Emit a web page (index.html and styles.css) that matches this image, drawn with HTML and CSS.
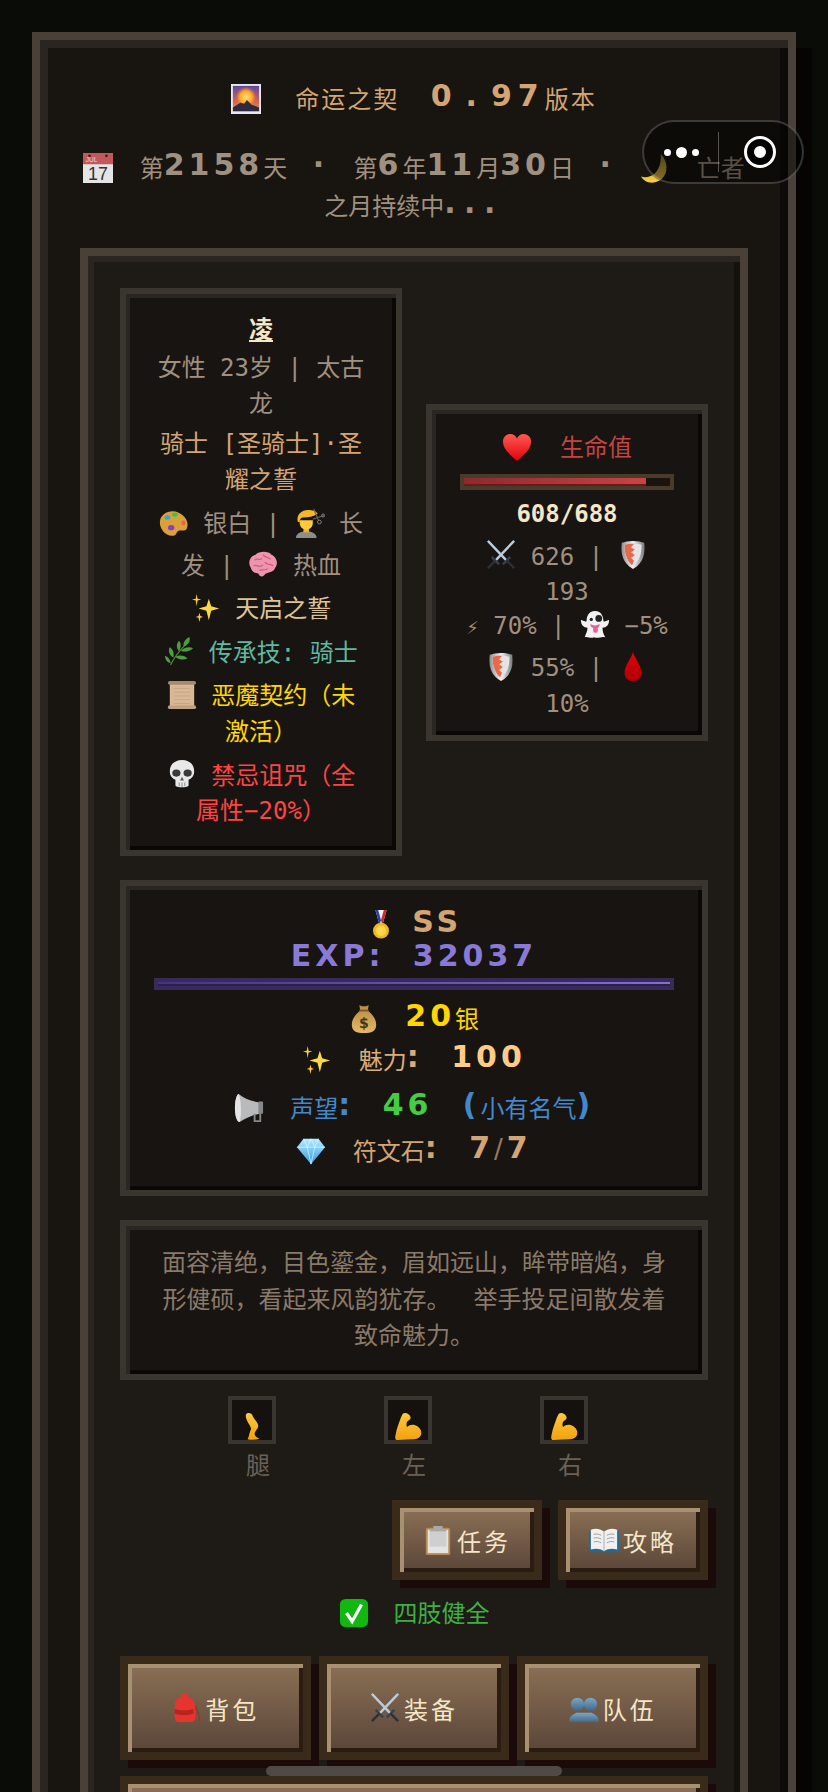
FILE: index.html
```html
<!DOCTYPE html>
<html>
<head>
    <title>命运之契</title>
    <link rel="stylesheet" href="styles.css">
</head>
<body>
    <svg class="sprite" xmlns="http://www.w3.org/2000/svg">
        <defs>
            <linearGradient id="g-sky" x1="0" y1="0" x2="0" y2="1"><stop offset="0" stop-color="#5b4a9e"/><stop offset=".55" stop-color="#c9605a"/><stop offset="1" stop-color="#f0913a"/></linearGradient>
            <radialGradient id="g-sun"><stop offset="0" stop-color="#ffe27a"/><stop offset=".6" stop-color="#ffa726"/><stop offset="1" stop-color="#ff7a2a" stop-opacity="0"/></radialGradient>
            <linearGradient id="g-moon" x1="0" y1="0" x2="0" y2="1"><stop offset="0" stop-color="#8f7a3c"/><stop offset="1" stop-color="#ffd23c"/></linearGradient>
            <linearGradient id="g-skin" x1="0" y1="0" x2="0" y2="1"><stop offset="0" stop-color="#ffc83d"/><stop offset="1" stop-color="#f2a20f"/></linearGradient>
            <linearGradient id="g-steel" x1="0" y1="0" x2="1" y2="0"><stop offset="0" stop-color="#8d8f92"/><stop offset=".5" stop-color="#f2f2f2"/><stop offset="1" stop-color="#77797c"/></linearGradient>
            <linearGradient id="g-heart" x1="0" y1="0" x2="0" y2="1"><stop offset="0" stop-color="#ff5a50"/><stop offset="1" stop-color="#e0000c"/></linearGradient>
            <linearGradient id="g-drop" x1="0" y1="0" x2="0" y2="1"><stop offset="0" stop-color="#e8000a"/><stop offset="1" stop-color="#a80006"/></linearGradient>
            <linearGradient id="g-gem" x1="0" y1="0" x2="0" y2="1"><stop offset="0" stop-color="#b5ecff"/><stop offset="1" stop-color="#2f9be8"/></linearGradient>
            <linearGradient id="g-bust" x1="0" y1="0" x2="0" y2="1"><stop offset="0" stop-color="#7fa6c4"/><stop offset="1" stop-color="#3f6a8c"/></linearGradient>
            <linearGradient id="g-bag" x1="0" y1="0" x2="0" y2="1"><stop offset="0" stop-color="#b88a42"/><stop offset="1" stop-color="#e2b866"/></linearGradient>
        </defs>
        <symbol id="i-sunrise" viewBox="0 0 32 32"><rect width="32" height="32" fill="#e6e8f2"/><rect x="2" y="2" width="28" height="27" fill="url(#g-sky)"/><circle cx="16" cy="14" r="11" fill="url(#g-sun)"/><path d="M2 29V25L10 20 14 21 17 17 22 22 30 25V29Z" fill="#2f2a40"/></symbol>
        <symbol id="i-moon" viewBox="0 0 32 32"><path d="M22 1C31 9 31 27 17 31 10 33 4 30 1 25 12 29 24 19 22 1Z" fill="url(#g-moon)"/></symbol>
        <symbol id="i-palette" viewBox="0 0 32 32"><path d="M1 14C2 6 12 1 21 5 28 8 32 15 30 21 29 25 24 24 22 24 19 24 19 28 17 29 9 32 0 23 1 14Z" fill="#d9a03c"/><ellipse cx="9" cy="10" rx="3" ry="2.4" fill="#2aa8e0"/><ellipse cx="17" cy="7" rx="3" ry="2.2" fill="#3cc43c"/><ellipse cx="26" cy="16" rx="2.2" ry="2.6" fill="#f0604a"/><ellipse cx="13" cy="21" rx="3.4" ry="2.8" fill="#8a3cc8"/></symbol>
        <symbol id="i-haircut" viewBox="0 0 32 32"><path d="M1 32C1 27 6 25 12 25S23 27 23 32Z" fill="#8d8d8d"/><rect x="9" y="20" width="6" height="6" fill="#f0b028"/><path d="M5 13H19V16C19 20 16 23 12 23S5 20 5 16Z" fill="#ffc83d"/><path d="M3 15C1 7 7 2 14 2 18 2 23 3 24 6 20 9 14 10 9 10 6 10 5 12 5 15Z" fill="#f4b62a"/><path d="M20 1 25 13M31 8 19 12" stroke="#666" stroke-width="1.2" fill="none"/><circle cx="26" cy="15" r="2" fill="none" stroke="#888"/><circle cx="30" cy="8" r="1.6" fill="none" stroke="#888"/></symbol>
        <symbol id="i-brain" viewBox="0 0 32 32"><path d="M3 20C-1 14 3 7 8 6 12 2 22 2 25 6 30 8 33 15 29 20 27 26 21 24 18 27 16 31 12 29 11 26 7 26 4 24 3 20Z" fill="#ee94ae"/><path d="M7 12C10 9 12 13 15 10M16 6C18 10 22 8 24 11M6 18C10 16 12 21 16 17M18 14C20 18 24 15 27 18M12 23C15 21 18 24 21 21" stroke="#c8607e" stroke-width="1.3" fill="none"/></symbol>
        <symbol id="i-sparkles" viewBox="0 0 32 32"><path d="M19 6 21.5 14 30 16.500 21.500 19 19 29 16.500 19 8 16.500 16.500 14Z" fill="#ffd84a"/><path d="M6 1 7 6 11 7 7 8 6 14 5 8 1 7 5 6Z" fill="#ffca3a"/><path d="M9 21 10 24.500 13 25.500 10 26.500 9 31 8 26.500 5 25.500 8 24.500Z" fill="#ffca3a"/></symbol>
        <symbol id="i-herb" viewBox="0 0 32 32"><path d="M7 31C10 24 16 16 26 6" stroke="#5a8a3c" stroke-width="1.2" fill="none"/><path d="M27 1C29 6 25 10 21 11 20 7 23 3 27 1ZM16 5C19 8 18 13 16 16 13 13 13 8 16 5ZM31 13C27 17 22 17 18 16 21 12 27 11 31 13ZM6 12C10 14 11 19 10 23 6 21 4 16 6 12ZM25 24C21 26 15 25 12 22 16 20 22 20 25 24ZM1 21C4 22 7 25 7 29 3 28 1 25 1 21Z" fill="#4aa040"/></symbol>
        <symbol id="i-scroll" viewBox="0 0 32 32"><rect x="3" y="3" width="26" height="27" fill="#d8b896"/><path d="M7 9H25M7 13H25M7 17H25M7 21H25M7 25H25" stroke="#c4a482" stroke-width="1"/><rect x="1" y="1" width="30" height="4" rx="2" fill="#a88a6c"/><rect x="1" y="27" width="30" height="4" rx="2" fill="#c0a280"/></symbol>
        <symbol id="i-skull" viewBox="0 0 32 32"><path d="M16 1C7 1 3 7 3 13 3 18 6 21 9 22V28C9 31 23 31 23 28V22C26 21 29 18 29 13 29 7 25 1 16 1Z" fill="#e8e8e8"/><ellipse cx="10" cy="15" rx="4.400" ry="3.800" fill="#3a3a3a"/><ellipse cx="22" cy="15" rx="4.400" ry="3.800" fill="#3a3a3a"/><path d="M16 19 14 23H18Z" fill="#555"/><path d="M13 25V29M16 25V30M19 25V29" stroke="#888" stroke-width="1"/></symbol>
        <symbol id="i-heart" viewBox="0 0 32 32"><path d="M16 31C6 22 1 17 1 10 1 5 5 2 9 2 12 2 15 4 16 7 17 4 20 2 23 2 27 2 31 5 31 10 31 17 26 22 16 31Z" fill="url(#g-heart)"/></symbol>
        <symbol id="i-swords" viewBox="0 0 32 32"><path d="M30 1 9 23M2 1 23 23" stroke="#b8ccdc" stroke-width="2.600"/><path d="M6 18 14 26M26 18 18 26" stroke="#3a4048" stroke-width="2.400"/><path d="M10 22 2 30M22 22 30 30" stroke="#2c3036" stroke-width="2.400"/></symbol>
        <symbol id="i-shield" viewBox="0 0 32 32"><path d="M16 1C21 1 25 2 28 3 29 14 28 24 16 31 4 24 3 14 4 3 7 2 11 1 16 1Z" fill="url(#g-steel)"/><path d="M16 4C19 4 22 4 25 5 25 14 24 21 16 28 8 21 7 14 7 5 10 4 13 4 16 4Z" fill="#e4e4e4"/><path d="M7 5C10 4 14 4 17 4L14 8 18 10 14 13 18 16 14 19 17 22 15 27C9 21 7 14 7 5Z" fill="#e8694a"/></symbol>
        <symbol id="i-ghost" viewBox="0 0 32 32"><path d="M16 1C9 1 7 7 7 12 4 13 2 10 1 11 1 16 4 19 8 19 8 23 6 26 5 29 9 28 11 31 15 29 19 31 22 28 27 29 25 26 24 23 24 19 28 19 31 16 31 11 30 10 28 13 25 12 25 7 23 1 16 1Z" fill="#f2f2f2"/><circle cx="20" cy="9" r="3.600" fill="#222"/><circle cx="12" cy="10" r="1.800" fill="#222"/><path d="M11 15C14 17 18 17 21 15 21 17 20 19 19 19V22C19 25 14 25 14 22V19C12 19 11 17 11 15Z" fill="#e8609a"/></symbol>
        <symbol id="i-drop" viewBox="0 0 32 32"><path d="M16 0C18 8 25 14 25 22 25 28 21 31 16 31S7 28 7 22C7 14 14 8 16 0Z" fill="url(#g-drop)"/><path d="M10 24C12 28 20 28 22 24 21 29 11 29 10 24Z" fill="#e8000a"/></symbol>
        <symbol id="i-medal" viewBox="0 0 32 32"><path d="M10 0H22L18 14H14Z" fill="#f2f2f2"/><path d="M10 0H13L16 11 15 14H14Z" fill="#2244aa"/><path d="M19 0H22L18 14H17L16 11Z" fill="#d02a2a"/><circle cx="16" cy="22" r="8.500" fill="#f0b820"/><circle cx="16" cy="22" r="5.500" fill="#ffd84a"/></symbol>
        <symbol id="i-horn" viewBox="0 0 32 32"><path d="M5 1C3 1 1 8 1 16S3 31 6 31C10 28 18 24 27 22V10C18 9 10 5 5 1Z" fill="#b8babc"/><path d="M5 1C3 1 1 8 1 16S3 31 6 31C8 25 8 8 5 1Z" fill="#e4e4e6"/><rect x="26" y="9" width="5" height="13" rx="1" fill="#85878a"/><path d="M22 22V30H28V21" fill="none" stroke="#85878a" stroke-width="2"/></symbol>
        <symbol id="i-gem" viewBox="0 0 32 32"><path d="M8 3H24L31 12 16 30 1 12Z" fill="url(#g-gem)"/><path d="M8 3 12 12 16 3 20 12 24 3M1 12H31M12 12 16 30 20 12" fill="none" stroke="#d8f6ff" stroke-width=".8"/></symbol>
        <symbol id="i-leg" viewBox="0 0 32 32"><path d="M9 3C11 0 16 1 17 5 19 9 24 13 23 17 22 20 19 22 19 25 19 27 21 29 24 30 24 32 14 32 11 31 13 27 13 23 15 19 14 15 8 9 9 3Z" fill="url(#g-skin)"/></symbol>
        <symbol id="i-muscle" viewBox="0 0 32 32"><path d="M10 2C13 0 18 2 19 6 19 9 16 10 15 11 14 13 14 15 15 17 20 12 29 15 31 22 32 27 29 31 23 31L4 32C1 32 1 29 2 25 3 19 6 12 8 6Z" fill="url(#g-skin)"/></symbol>
        <symbol id="i-clipboard" viewBox="0 0 32 32"><rect x="3" y="3" width="26" height="29" rx="2" fill="#b98a50"/><rect x="5" y="5" width="22" height="25" fill="#e4e4e4"/><rect x="7" y="7" width="18" height="16" fill="#cfcfcf"/><path d="M11 1H21V5H25V7H7V5H11Z" fill="#a8a8a8"/></symbol>
        <symbol id="i-book" viewBox="0 0 32 32"><path d="M0 7H32V29H0Z" fill="#1f6a96"/><path d="M2 5C7 3 12 4 16 7 20 4 25 3 30 5V26C25 25 20 25 16 28 12 25 7 25 2 26Z" fill="#f0f0f0"/><path d="M16 7V28" stroke="#aaa"/><path d="M5 10C8 9 11 10 13 11M5 14C8 13 11 14 13 15M5 18C8 17 11 18 13 19M19 11C21 10 24 9 27 10M19 15C21 14 24 13 27 14M19 19C21 18 24 17 27 18" stroke="#999" fill="none"/></symbol>
        <symbol id="i-check" viewBox="0 0 32 32"><rect x="1" y="1" width="30" height="30" rx="6" fill="#10b810"/><path d="M8 16 14 25 24 7" stroke="#fff" stroke-width="3.500" fill="none"/></symbol>
        <symbol id="i-backpack" viewBox="0 0 32 32"><path d="M11 1H17V4C23 5 26 10 26 15V27C26 30 24 31 21 31H9C6 31 4 30 4 27V15C4 10 6 5 11 4Z" fill="#e6352e"/><path d="M4 17C10 19 18 19 24 17V22C18 24 10 24 4 22Z" fill="#b82420"/><path d="M26 14C28 18 30 24 31 30" stroke="#8a3a30" stroke-width="1.500" fill="none"/></symbol>
        <symbol id="i-busts" viewBox="0 0 32 32"><circle cx="9" cy="12" r="7" fill="url(#g-bust)"/><circle cx="23" cy="12" r="7" fill="url(#g-bust)"/><path d="M0 31C0 25 4 23 8 21H24C28 23 32 25 32 31Z" fill="url(#g-bust)"/></symbol>
    </svg>

    <div class="panel">
        <div class="title">
            <svg class="em em-title"><use href="#i-sunrise"/></svg>命运之契 <span class="px ver">0<span class="px-dot">.</span>97</span>版本
        </div>
        <div class="date">
            <svg class="em" viewBox="0 0 32 32"><rect width="32" height="32" fill="#e4e4e4"/><rect width="32" height="12" fill="#c0585c"/><circle cx="7" cy="3" r="1.4" fill="#3a1c1c"/><circle cx="25" cy="3" r="1.4" fill="#3a1c1c"/><text x="3" y="10" class="cal-month">JUL</text><text x="16" y="29" class="cal-day">17</text></svg> 第<span class="px">2158</span>天 <span class="px dot">·</span> 第<span class="px">6</span>年<span class="px">11</span>月<span class="px">30</span>日 <span class="px dot">·</span> <svg class="em"><use href="#i-moon"/></svg> 亡者之月持续中<span class="px dots">...</span>
        </div>

        <div class="main">
            <div class="top-row">
                <div class="card info">
                    <div class="name">凌</div>
                    <div class="row muted">女性 23岁 | 太古龙</div>
                    <div class="row tan">骑士 [圣骑士]·圣耀之誓</div>
                    <div class="row row-e muted"><svg class="em"><use href="#i-palette"/></svg> 银白 | <svg class="em"><use href="#i-haircut"/></svg> 长发 | <svg class="em"><use href="#i-brain"/></svg> 热血</div>
                    <div class="row row-e sand"><svg class="em"><use href="#i-sparkles"/></svg> 天启之誓</div>
                    <div class="row row-e teal"><svg class="em"><use href="#i-herb"/></svg> 传承技: 骑士</div>
                    <div class="row row-e gold"><svg class="em"><use href="#i-scroll"/></svg> 恶魔契约（未激活）</div>
                    <div class="row row-e red"><svg class="em"><use href="#i-skull"/></svg> 禁忌诅咒（全属性−20%）</div>
                </div>

                <div class="card hp">
                    <div class="hp-label"><svg class="em em-heart"><use href="#i-heart"/></svg>生命值</div>
                    <div class="bar hp-bar"><div class="fill hp-fill" style="width: 88.37%"></div></div>
                    <div class="hp-num">608/688</div>
                    <div class="row row-e muted stat-a"><svg class="em"><use href="#i-swords"/></svg> 626 | <svg class="em"><use href="#i-shield"/></svg> 193</div>
                    <div class="row row-e muted stat-b"><span class="bolt">⚡</span> 70% | <svg class="em"><use href="#i-ghost"/></svg> −5%</div>
                    <div class="row row-e muted stat-c"><svg class="em"><use href="#i-shield"/></svg> 55% | <svg class="em"><use href="#i-drop"/></svg> 10%</div>
                </div>
            </div>

            <div class="card exp">
                <div class="exp-line rank tan"><svg class="em"><use href="#i-medal"/></svg> <span class="px">SS</span></div>
                <div class="exp-line rank violet"><span class="px">EXP: 32037</span></div>
                <div class="bar exp-bar"><div class="fill exp-fill" style="width: 100%"></div></div>
                <div class="exp-line gold"><svg class="em" viewBox="0 0 32 32"><path d="M11 1C13 3 19 3 21 1L20 7C25 11 29 16 29 22 29 29 24 31 16 31S3 29 3 22C3 16 7 11 12 7Z" fill="url(#g-bag)"/><rect x="11" y="6" width="10" height="2" fill="#7a5826"/><text x="16" y="26" class="bag-sign">$</text></svg> <span class="px">20</span>银</div>
                <div class="exp-line peach"><svg class="em"><use href="#i-sparkles"/></svg> 魅力<span class="px">: <span class="peach-num">100</span></span></div>
                <div class="exp-line blue"><svg class="em"><use href="#i-horn"/></svg> 声望<span class="px">: </span><span class="px green">46</span> <span class="px">(</span>小有名气<span class="px">)</span></div>
                <div class="exp-line rune tan"><svg class="em"><use href="#i-gem"/></svg> 符文石<span class="px">: 7<span class="slash">/</span>7</span></div>
            </div>

            <div class="card desc">面容清绝，目色鎏金，眉如远山，眸带暗焰，身形健硕，看起来风韵犹存。<span class="gap"></span>举手投足间散发着致命魅力。</div>

            <div class="limbs">
                <div class="limb"><div class="limb-box"><svg class="em"><use href="#i-leg"/></svg></div><div class="limb-label">腿</div></div>
                <div class="limb"><div class="limb-box"><svg class="em"><use href="#i-muscle"/></svg></div><div class="limb-label">左</div></div>
                <div class="limb"><div class="limb-box"><svg class="em"><use href="#i-muscle"/></svg></div><div class="limb-label">右</div></div>
            </div>

            <div class="btn-row">
                <button class="btn btn-small"><svg class="em"><use href="#i-clipboard"/></svg>任务</button>
                <button class="btn btn-small"><svg class="em"><use href="#i-book"/></svg>攻略</button>
            </div>

            <div class="status"><svg class="em"><use href="#i-check"/></svg>四肢健全</div>

            <div class="btn-grid">
                <button class="btn"><svg class="em"><use href="#i-backpack"/></svg>背包</button>
                <button class="btn"><svg class="em"><use href="#i-swords"/></svg>装备</button>
                <button class="btn"><svg class="em"><use href="#i-busts"/></svg>队伍</button>
                <button class="btn btn-wide"></button>
            </div>
        </div>
    </div>

    <div class="capsule">
        <div class="capsule-dots"><i></i><i class="big"></i><i></i></div>
        <div class="capsule-line"></div>
        <div class="capsule-target"></div>
    </div>
    <div class="home-bar"></div>
</body>
</html>
```

FILE: styles.css
```css
html, body { height: 100%; overflow: hidden; }
body { margin: 0; padding: 32px; box-sizing: border-box; background: #0a0c07; color: #a09080; font-family: "DejaVu Sans Mono", "Noto Sans CJK SC", monospace; font-size: 24px; line-height: 36px; }
.sprite { position: absolute; width: 0; height: 0; }
.cal-month { font-family: "Liberation Sans", sans-serif; font-size: 7px; fill: #f4d8d8; }
.cal-day { font-family: "Liberation Sans", sans-serif; font-size: 19px; text-anchor: middle; fill: #333; }
.bag-sign { font-family: "DejaVu Sans", sans-serif; font-weight: bold; font-size: 15px; text-anchor: middle; fill: #4a3414; }

.em { width: 30px; height: 30px; vertical-align: -6px; }
.px { font-family: "DejaVu Sans", sans-serif; font-weight: bold; font-size: 30px; letter-spacing: 4px; word-spacing: 14px; line-height: 24px; vertical-align: 2px; }
.px-dot { margin: 0 8px; }

.panel { width: 764px; box-sizing: border-box; padding: 40px; background: #18140f; border: 8px solid #4a4038; box-shadow: 16px 16px 0 #050403, inset 8px 8px 0 #2a2520, inset -8px -8px 0 #0d0b09; }
.title { color: #d4a574; text-align: center; letter-spacing: 2px; height: 40px; line-height: 40px; }
.em-title { margin-right: 34px; }
.ver { margin-left: 15px; letter-spacing: 6px; }
.date { margin-top: 30px; color: #a09080; text-align: center; line-height: 38px; }
.date > .em { margin-right: 12px; }
.dot { margin: 0 11px; }
.dots { letter-spacing: 8.5px; }

.main { margin-top: 22px; padding: 32px; background: #1e1a15; border: 8px solid #4a4038; box-shadow: inset 6px 6px 0 #2a2520, inset -6px -6px 0 #15120d; }
.top-row { display: grid; grid-template-columns: 1fr 1fr; gap: 24px; align-items: center; }
.card { padding: 20px 24px; background: #181411; border: 6px solid #3a352e; box-shadow: inset 4px 4px 0 #2a2621, inset -4px -4px 0 #0a0806; text-align: center; }

.info { padding-bottom: 21px; }
.name { color: #f5e6c8; font-weight: bold; line-height: 32px; text-decoration: underline; }
.row { margin-top: 4px; padding: 0 6px; }
.row-e { margin-top: 2px; }
/* only lines that hold an emoji get taller, wrapped text lines keep 36px */
.row-e .em { margin-top: 7.5px; }
.muted { color: #a09080; }
.tan { color: #d4a574; }
.sand { color: #dcc498; }
.teal { color: #5fb8a0; }
.gold { color: #ffd700; }
.red { color: #ff4444; }
.violet { color: #8a7ad8; }
.peach { color: #d8ae7c; }
.peach-num { color: #ffcc88; }
.blue { color: #4488cc; }
.green { color: #44cc44; margin-right: 16px; }

.hp { padding-bottom: 13px; }
.hp-label { color: #c44444; }
.em-heart { margin-right: 28px; }
.bar { margin: 8px 4px; border: 4px solid #4a3a2a; background: #1a1410; }
.fill { height: 8px; }
.hp-fill { background: linear-gradient(90deg, #8b2a2e, #c84444); box-shadow: inset 0 -2px 0 #6a1a1a; }
.hp-num { color: #f5e6c8; font-weight: bold; line-height: 32px; }
.stat-a { margin-top: 3px; }
.stat-b { margin-top: -2px; }
.stat-b .em { margin-top: 0; }
.stat-c { margin-top: -2px; }
.bolt { font-family: "DejaVu Sans", sans-serif; font-size: 18px; }

.exp { margin-top: 24px; padding-top: 23px; padding-bottom: 20px; }
.exp-line { margin-top: 7px; }
.exp-line .em { margin-right: 12px; }
.rank { margin-top: 0; line-height: 34px; }
.rank .em { margin-right: 2px; }
.exp-bar { height: 4px; margin: 1px 4px 12px; border-color: #3a2a58; background: #241a44; }
.exp-fill { height: 4px; background: linear-gradient(90deg, #43338c, #8070d0); box-shadow: inset 0 -2px 0 #2a2050; }
.exp-bar + .exp-line { margin-top: 0; }
.peach { margin-top: 5px; }
.blue { margin-top: 12px; }
.slash { font-weight: normal; font-size: 26px; opacity: .7; }

.desc { margin-top: 24px; padding: 19px 30px 19.5px; color: #8a7a6a; line-height: 36.5px; }
.gap { display: inline-block; width: 23px; }

.limbs { display: flex; justify-content: center; gap: 96px; margin-top: 16px; }
.limb { width: 60px; color: #6b6156; text-align: center; }
.limb-box { display: flex; justify-content: center; align-items: flex-end; box-sizing: border-box; width: 48px; height: 48px; background: #14110e; border: 4px solid #3a352e; }
.limb-box .em { width: 28px; height: 28px; }
.limb-label { margin-top: 4px; }

.btn-row { display: flex; justify-content: flex-end; gap: 16px; margin-top: 16px; }
.btn { display: flex; align-items: center; justify-content: center; gap: 4px; box-sizing: border-box; padding: 0; background: linear-gradient(180deg, #8a7055, #5a4538); border: 8px solid #3a2a1a; box-shadow: 8px 8px 0 #1a0a0a, inset 4px 4px 0 #a89070, inset -4px -4px 0 #2a1c10; color: #f5e6c8; font-family: inherit; font-size: 24px; letter-spacing: 3px; }
.btn-small { width: 150px; height: 80px; }

.status { margin-top: 16px; color: #3cb043; text-align: center; }
.status .em { margin-right: 25px; }

.btn-grid { display: grid; grid-template-columns: repeat(3, 1fr); gap: 16px 8px; margin-top: 24px; }
.btn-grid .btn { height: 104px; }
.btn-grid .btn-wide { grid-column: 1 / 4; }

.capsule { position: fixed; left: 642px; top: 120px; display: flex; align-items: center; box-sizing: border-box; width: 162px; height: 64px; border: 2px solid rgba(255, 255, 255, .2); border-radius: 32px; background: rgba(0, 0, 0, .45); }
.capsule-dots { display: flex; align-items: center; gap: 5px; margin-left: 20px; }
.capsule-dots i { width: 7px; height: 7px; border-radius: 50%; background: #fff; }
.capsule-dots i.big { width: 11px; height: 11px; }
.capsule-line { width: 1px; height: 40px; margin-left: 19px; background: rgba(255, 255, 255, .3); }
.capsule-target { box-sizing: border-box; width: 32px; height: 32px; margin-left: 25px; border: 10px solid #000; border-radius: 50%; background: #fff; outline: 3.5px solid #fff; outline-offset: -3.5px; }
.home-bar { position: fixed; left: 266px; top: 1766px; width: 296px; height: 10px; border-radius: 5px; background: #4f4a46; }
```
